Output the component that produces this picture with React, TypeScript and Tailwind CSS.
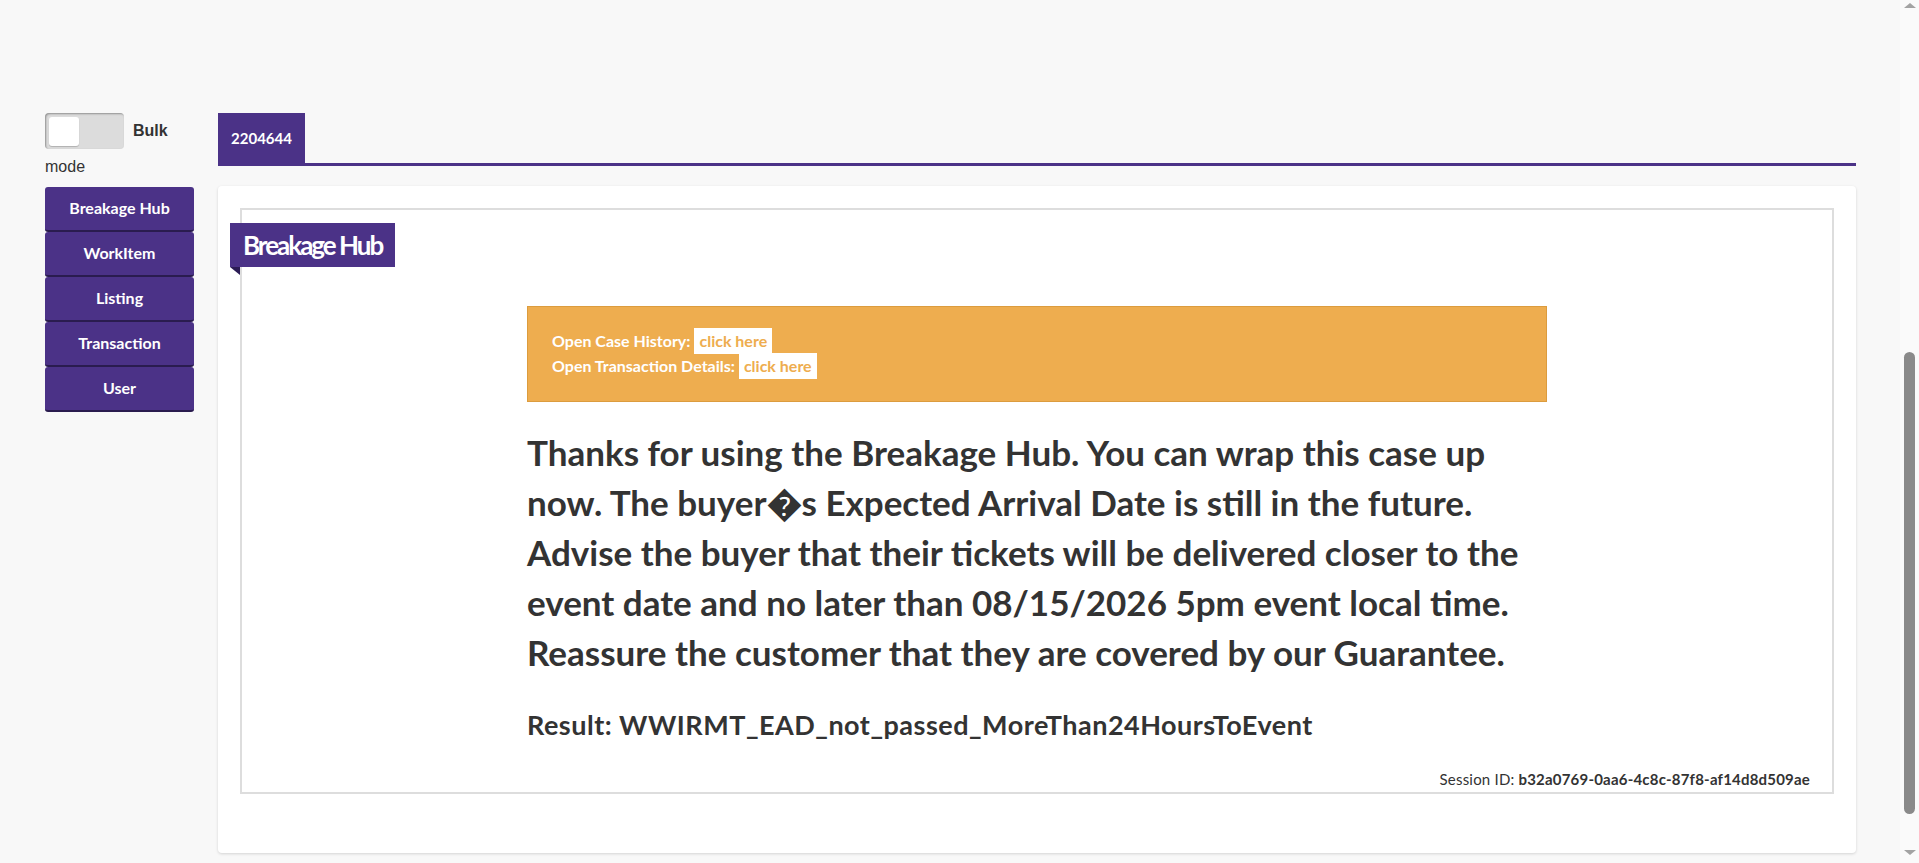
import React, { useState } from 'react'

const navItems = ['Breakage Hub', 'WorkItem', 'Listing', 'Transaction', 'User']

function BulkToggle() {
  const [on, setOn] = useState(false)
  return (
    <div className="w-[149px] font-['Liberation_Sans',Arial,sans-serif] text-[16px] leading-[34px] text-[#333]">
      <button
        type="button"
        onClick={() => setOn(!on)}
        className="inline-flex align-middle w-[79px] h-[36px] p-[4px] rounded-[4px] bg-[#dcdcdc] shadow-[inset_1px_1px_2px_rgba(0,0,0,0.35)]"
      >
        <span
          className={`block w-[30px] h-[29px] rounded-[3px] bg-white shadow-[0_1px_1px_rgba(0,0,0,0.2)] ${on ? 'ml-auto' : ''}`}
        />
      </button>
      <span className="ml-[9px] align-middle">
        <strong>Bulk</strong> mode
      </span>
    </div>
  )
}

function Sidebar() {
  return (
    <aside className="w-[149px] shrink-0">
      <BulkToggle />
      <nav className="mt-[3px] flex flex-col">
        {navItems.map((item) => (
          <button
            key={item}
            type="button"
            className="h-[45px] w-full rounded-[3px] bg-[#4b3287] border-b-2 border-[#2a1c4f] text-white text-[16px] font-bold font-['Lato',sans-serif] hover:bg-[#5a3d9e]"
          >
            {item}
          </button>
        ))}
      </nav>
    </aside>
  )
}

export default function App() {
  return (
    <div className="flex min-h-screen bg-[#f8f8f8]">
      <main className="flex-1 flex pt-[113px] pl-[45px] pr-[44px] gap-[24px]">
        <Sidebar />

        <section className="flex-1 flex flex-col">
          {/* Tabs */}
          <div className="flex border-b-[3px] border-[#4b3287]">
            <div className="w-[87px] h-[50px] flex items-center justify-center bg-[#4b3287] text-white text-[15px] font-bold font-['Lato',sans-serif]">
              2204644
            </div>
          </div>

          {/* Card */}
          <div className="mt-[20px] bg-white rounded-[4px] shadow-[0_1px_3px_rgba(0,0,0,0.15)] p-[22px] pb-[59px]">
            <div className="border-2 border-[#dddddd] pt-[13px] pb-[3px] font-['Lato',sans-serif] text-[#333]">
              <div className="-ml-[12px] inline-flex flex-col">
                <div className="h-[44px] px-[13px] flex items-center bg-[#4b3287] text-white text-[26px] font-bold tracking-[-2px]">
                  Breakage Hub
                </div>
                <div className="w-0 h-0 border-l-[10px] border-l-transparent border-t-[8px] border-t-[#2b1b55]" />
              </div>

              <div className="w-[1020px] mx-auto mt-[31px]">
                <div className="bg-[#eead4f] border border-[#dc9c3e] pt-[21px] pb-[23px] px-[24px] text-white text-[16px] font-bold">
                  <div className="h-[25px] flex items-center gap-[4px]">
                    <span>Open Case History:</span>
                    <a href="#" className="bg-white text-[#eead4f] px-[5px] leading-[26px]">click here</a>
                  </div>
                  <div className="h-[25px] flex items-center gap-[4px]">
                    <span>Open Transaction Details:</span>
                    <a href="#" className="bg-white text-[#eead4f] px-[5px] leading-[26px]">click here</a>
                  </div>
                </div>

                <p className="mt-[25px] text-[35px] leading-[50px] font-bold">
                  Thanks for using the Breakage Hub. You can wrap this case up now. The buyer�s Expected Arrival Date is still in the future. Advise the buyer that their tickets will be delivered closer to the event date and no later than 08/15/2026 5pm event local time. Reassure the customer that they are covered by our Guarantee.
                </p>

                <p className="mt-[30px] text-[27px] leading-[36px] font-bold tracking-[0.5px]">
                  Result: WWIRMT_EAD_not_passed_MoreThan24HoursToEvent
                </p>
              </div>

              <div className="mt-[26px] pr-[22px] text-right text-[15px] leading-[20px] tracking-[0.2px]">
                Session ID: <span className="font-bold">b32a0769-0aa6-4c8c-87f8-af14d8d509ae</span>
              </div>
            </div>
          </div>
        </section>
      </main>

      {/* Scrollbar */}
      <div className="w-[19px] shrink-0 bg-[#fafafa] flex flex-col items-center">
        <div className="mt-[3px] w-0 h-0 border-l-[6px] border-r-[6px] border-b-[5px] border-l-transparent border-r-transparent border-b-[#a3a3a3]" />
        <div className="mt-[344px] w-[11px] h-[462px] rounded-full bg-[#8a8a8a]" />
        <div className="mt-[36px] w-0 h-0 border-l-[6px] border-r-[6px] border-t-[5px] border-l-transparent border-r-transparent border-t-[#a3a3a3]" />
      </div>
    </div>
  )
}
